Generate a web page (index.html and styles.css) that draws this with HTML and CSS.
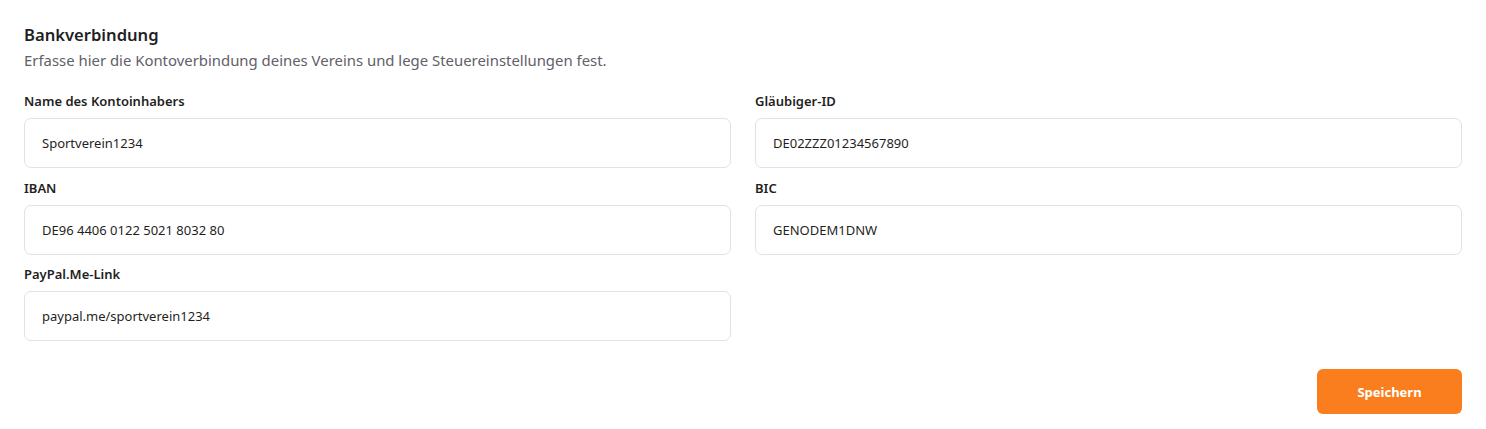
FILE: index.html
```html
<!DOCTYPE html>
<html>
    <head>
        <title>Bankverbindung</title>
        <link rel="stylesheet" href="styles.css">
    </head>
    <body>
        <section class="panel">
            <h2>Bankverbindung</h2>
            <p class="hint">Erfasse hier die Kontoverbindung deines Vereins und lege Steuereinstellungen fest.</p>
            <div class="fields">
                <div class="field">
                    <label for="owner">Name des Kontoinhabers</label>
                    <input id="owner" type="text" value="Sportverein1234" />
                </div>
                <div class="field">
                    <label for="creditor">Gläubiger-ID</label>
                    <input id="creditor" type="text" value="DE02ZZZ01234567890" />
                </div>
                <div class="field">
                    <label for="iban">IBAN</label>
                    <input id="iban" type="text" value="DE96 4406 0122 5021 8032 80" />
                </div>
                <div class="field">
                    <label for="bic">BIC</label>
                    <input id="bic" type="text" value="GENODEM1DNW" />
                </div>
                <div class="field">
                    <label for="paypal">PayPal.Me-Link</label>
                    <input id="paypal" type="text" value="paypal.me/sportverein1234" />
                </div>
            </div>
            <div class="actions">
                <button type="button">Speichern</button>
            </div>
        </section>
    </body>
</html>
```

FILE: styles.css
```css
*{
    box-sizing: border-box;
    font-family: 'Noto Sans', sans-serif;
}
body{
    margin: 0;
    background: #fff;
    color: #1f1f24;
}
.panel{
    padding: 24px 24px 15px;
}
h2{
    margin: 0;
    font-size: 16.6px;
    font-weight: 600;
    line-height: 22px;
}
.hint{
    margin: 4px 0 0;
    font-size: 14.9px;
    line-height: 20px;
    color: #5f6068;
}
.fields{
    display: grid;
    grid-template-columns: 1fr 1fr;
    column-gap: 24px;
    row-gap: 10.5px;
    margin-top: 22px;
}
.field label{
    display: block;
    font-size: 13px;
    font-weight: 600;
    line-height: 18px;
    margin-bottom: 8px;
}
.field input{
    display: block;
    width: 100%;
    height: 50px;
    padding: 0 17px;
    border: 1px solid #e1e1ea;
    border-radius: 7px;
    font-size: 13px;
    color: #1f1f24;
    background: #fff;
}
.actions{
    display: flex;
    justify-content: flex-end;
    margin-top: 28px;
}
button{
    width: 145px;
    height: 45px;
    border: 0;
    border-radius: 6px;
    background: #fa7e1e;
    color: #fff;
    font-size: 13px;
    font-weight: 700;
}
```
